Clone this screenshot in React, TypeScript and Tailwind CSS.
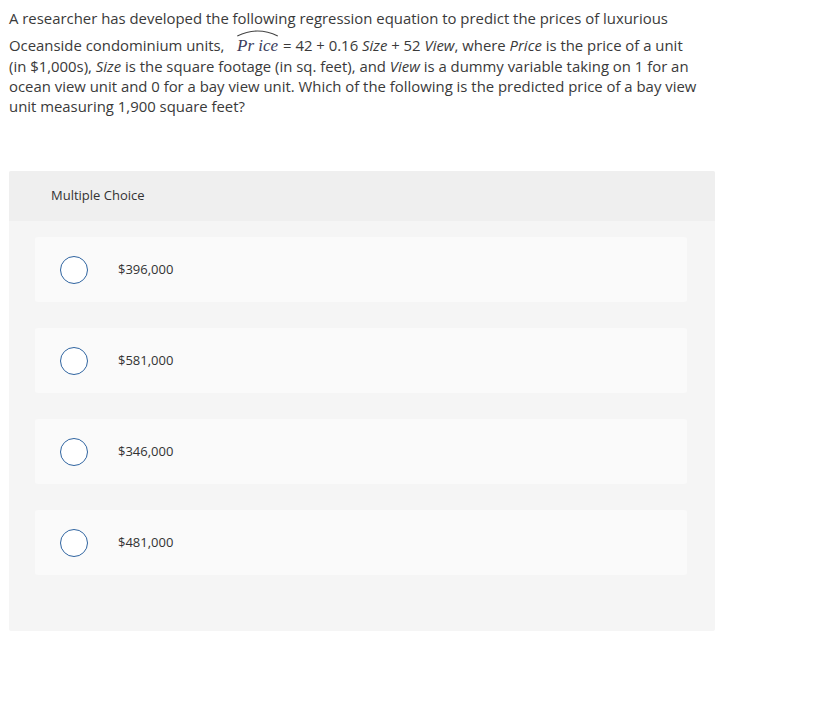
import React from "react";

const options = ["$396,000", "$581,000", "$346,000", "$481,000"];

function PriceHat() {
  return (
    <span className="relative inline-block px-[1px]">
      <svg
        className="absolute left-0 top-[-7px]"
        width="100%"
        height="9"
        viewBox="0 0 100 9"
        preserveAspectRatio="none"
      >
        <path d="M3 8 Q50 -2 97 8" fill="none" stroke="#444" strokeWidth="1.1" vectorEffect="non-scaling-stroke" />
      </svg>
      <span className="italic text-[17px] text-[#3c4060]" style={{ fontFamily: '"Liberation Serif", serif' }}>
        Pr ice
      </span>
    </span>
  );
}

export default function App() {
  return (
    <div className="w-[816px] min-h-[709px] bg-white text-[#3a3a3a]" style={{ fontFamily: '"Open Sans", sans-serif' }}>
      <div className="pl-[9px] pt-[8px] text-[14.9px] leading-[20px] whitespace-nowrap">
        <div>A researcher has developed the following regression equation to predict the prices of luxurious</div>
        <div className="mt-[7px]">
          Oceanside condominium units,&nbsp;&nbsp; <PriceHat /> = 42 + 0.16 <i>Size</i> + 52 <i>View</i>, where <i>Price</i> is the price of a unit
        </div>
        <div>
          (in $1,000s), <i>Size</i> is the square footage (in sq. feet), and <i>View</i> is a dummy variable taking on 1 for an
        </div>
        <div>ocean view unit and 0 for a bay view unit. Which of the following is the predicted price of a bay view</div>
        <div>unit measuring 1,900 square feet?</div>
      </div>
      <div className="ml-[9px] mt-[55px] w-[706px] rounded-[2px] bg-[#f5f5f5] pb-[56px]">
        <div className="h-[50px] bg-[#efefef] pl-[42px] flex items-center text-[13px] text-[#333] rounded-t-[2px]">
          Multiple Choice
        </div>
        <div className="pt-[16px] pl-[26px] pr-[28px] flex flex-col gap-[26px]">
          {options.map((o) => (
            <div key={o} className="h-[65px] bg-[#fafafa] rounded-[3px] flex items-center pl-[25px]">
              <span className="w-[28px] h-[28px] rounded-full border border-[#2f64a0] bg-white shrink-0" />
              <span className="ml-[30px] text-[13px] text-[#333]">{o}</span>
            </div>
          ))}
        </div>
      </div>
    </div>
  );
}
